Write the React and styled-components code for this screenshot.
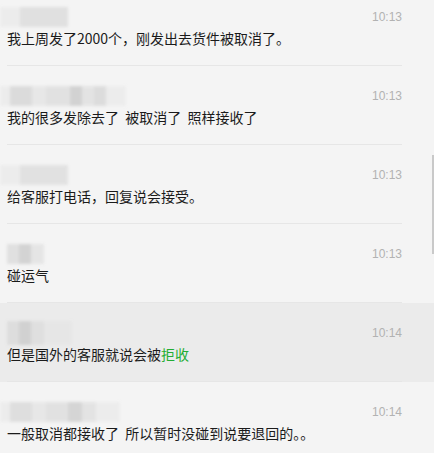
import styled, { createGlobalStyle } from "styled-components"

const GlobalStyle = createGlobalStyle`
  html, body {
    margin: 0;
    padding: 0;
    background: #f4f4f4;
    overflow: hidden;
  }
  body {
    font-family: "Noto Sans CJK SC", "Liberation Sans", sans-serif;
  }
`

const Page = styled.div`
  position: relative;
  width: 434px;
  height: 453px;
  overflow: hidden;
  background: #f4f4f4;
`

const List = styled.div`
  margin-top: -13px;
  display: flex;
  flex-direction: column;
`

const Row = styled.div`
  padding: 0 32px 0 7px;
  background: ${props => props.active ? "#ebebeb" : "transparent"};
`

const RowInner = styled.div`
  height: 78px;
  padding-top: 18px;
  box-sizing: border-box;
  border-bottom: 1px solid ${props => props.last ? "transparent" : "#e6e6e6"};
  height: 79px;
`

const Header = styled.div`
  height: 23px;
  display: flex;
  justify-content: space-between;
  align-items: center;
`

const NameBlur = styled.div`
  display: flex;
  height: ${props => props.tall ? "24px" : "20px"};
  margin-left: ${props => props.offset || 0}px;
  filter: blur(1.5px);
  opacity: 0.9;
`

const Block = styled.div`
  width: ${props => props.w}px;
  background: ${props => props.c};
`

const Time = styled.span`
  font-family: "Liberation Sans", "Noto Sans CJK SC", sans-serif;
  font-size: 12px;
  color: #b2b2b2;
`

const Text = styled.p`
  margin: 0;
  font-size: 14px;
  line-height: 20px;
  color: #1b1b1b;
  white-space: pre;
`

const Green = styled.span`
  color: #22ad33;
`

const ScrollThumb = styled.div`
  position: absolute;
  right: 0;
  top: 155px;
  width: 2px;
  height: 99px;
  background: #c9c9c9;
`

const messages = [
  { name: [[20, "#ececec"], [48, "#dedede"]], offset: -7, time: "10:13", text: "我上周发了2000个，刚发出去货件被取消了。" },
  { name: [[10, "#ececec"], [22, "#d9d9d9"], [14, "#e6e6e6"], [24, "#e0e0e0"], [12, "#cfcfcf"], [12, "#e2e2e2"], [12, "#dadada"], [20, "#ececec"]], offset: -7, time: "10:13", text: "我的很多发除去了  被取消了  照样接收了" },
  { name: [[20, "#ececec"], [48, "#e0e0e0"]], offset: -7, time: "10:13", text: "给客服打电话，回复说会接受。" },
  { name: [[12, "#dedede"], [12, "#d0d0d0"], [13, "#e4e4e4"]], offset: 0, time: "10:13", text: "碰运气" },
  { name: [[12, "#dcdcdc"], [12, "#cfcfcf"], [13, "#dedede"], [28, "#e6e6e6"]], offset: 0, tall: true, time: "10:14", active: true, text: <>但是国外的客服就说会被<Green>拒收</Green></> },
  { name: [[10, "#ececec"], [22, "#dcdcdc"], [14, "#e6e6e6"], [22, "#e0e0e0"], [14, "#d2d2d2"], [14, "#e2e2e2"], [24, "#ececec"]], offset: -7, time: "10:14", text: "一般取消都接收了  所以暂时没碰到说要退回的。。", last: true },
]

function App() {
  return (
    <Page>
      <GlobalStyle />
      <List>
        {messages.map((m, i) => (
          <Row key={i} active={m.active}>
            <RowInner last={m.last}>
              <Header>
                <NameBlur offset={m.offset} tall={m.tall}>
                  {m.name.map(([w, c], j) => <Block key={j} w={w} c={c} />)}
                </NameBlur>
                <Time>{m.time}</Time>
              </Header>
              <Text>{m.text}</Text>
            </RowInner>
          </Row>
        ))}
      </List>
      <ScrollThumb />
    </Page>
  )
}

export default App
